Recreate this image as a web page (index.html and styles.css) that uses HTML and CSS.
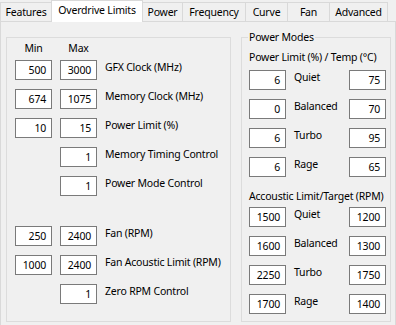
FILE: index.html
```html
<!DOCTYPE html>
<html lang="en">
<head>
  <meta charset="UTF-8" />
  <title>Overdrive Limits</title>
  <link rel="stylesheet" href="styles.css">
</head>
<body>
  <div class="tabs">
    <div class="tab t-features">Features</div>
    <div class="tab t-overdrive active">Overdrive Limits</div>
    <div class="tab t-power">Power</div>
    <div class="tab t-frequency">Frequency</div>
    <div class="tab t-curve">Curve</div>
    <div class="tab t-fan">Fan</div>
    <div class="tab t-advanced">Advanced</div>
  </div>

  <div class="page">
    <div class="group limits">
      <div class="row head">
        <span>Min</span>
        <span>Max</span>
        <span></span>
      </div>
      <div class="row">
        <div class="box">500</div>
        <div class="box">3000</div>
        <div class="label">GFX Clock (MHz)</div>
      </div>
      <div class="row">
        <div class="box">674</div>
        <div class="box">1075</div>
        <div class="label">Memory Clock (MHz)</div>
      </div>
      <div class="row">
        <div class="box">10</div>
        <div class="box">15</div>
        <div class="label">Power Limit (%)</div>
      </div>
      <div class="row">
        <div></div>
        <div class="box">1</div>
        <div class="label">Memory Timing Control</div>
      </div>
      <div class="row">
        <div></div>
        <div class="box">1</div>
        <div class="label">Power Mode Control</div>
      </div>
      <div class="row spaced">
        <div class="box">250</div>
        <div class="box">2400</div>
        <div class="label">Fan (RPM)</div>
      </div>
      <div class="row">
        <div class="box">1000</div>
        <div class="box">2400</div>
        <div class="label">Fan Acoustic Limit (RPM)</div>
      </div>
      <div class="row">
        <div></div>
        <div class="box">1</div>
        <div class="label">Zero RPM Control</div>
      </div>
    </div>

    <fieldset class="modes">
      <legend>Power Modes</legend>
      <div class="sub">Power Limit (%) / Temp (°C)</div>
      <div class="mrow">
        <div class="box">6</div>
        <div class="label">Quiet</div>
        <div class="box">75</div>
      </div>
      <div class="mrow">
        <div class="box">0</div>
        <div class="label">Balanced</div>
        <div class="box">70</div>
      </div>
      <div class="mrow">
        <div class="box">6</div>
        <div class="label">Turbo</div>
        <div class="box">95</div>
      </div>
      <div class="mrow">
        <div class="box">6</div>
        <div class="label">Rage</div>
        <div class="box">65</div>
      </div>

      <div class="sub second">Accoustic Limit/Target (RPM)</div>
      <div class="mrow">
        <div class="box">1500</div>
        <div class="label">Quiet</div>
        <div class="box">1200</div>
      </div>
      <div class="mrow">
        <div class="box">1600</div>
        <div class="label">Balanced</div>
        <div class="box">1300</div>
      </div>
      <div class="mrow">
        <div class="box">2250</div>
        <div class="label">Turbo</div>
        <div class="box">1750</div>
      </div>
      <div class="mrow">
        <div class="box">1700</div>
        <div class="label">Rage</div>
        <div class="box">1400</div>
      </div>
    </fieldset>
  </div>
</body>
</html>
```

FILE: styles.css
```css
body {
  margin: 0;
  width: 396px;
  background: #f0f0f0;
  font-family: "Noto Sans", sans-serif;
  font-size: 10.5px;
  letter-spacing: -0.2px;
  color: #000;
}

/* tab strip */
.tabs {
  display: flex;
  align-items: flex-end;
  height: 21px;
}

.tab {
  box-sizing: border-box;
  height: 19px;
  margin-left: -1px;
  border: 1px solid #d9d9d9;
  border-bottom: none;
  background: #f0f0f0;
  display: flex;
  align-items: center;
  justify-content: center;
  line-height: 15px;
  white-space: nowrap;
}

.tab:first-child {
  margin-left: 0;
}

.tab.active {
  height: 22px;
  margin-bottom: -1px;
  padding-bottom: 2px;
  background: #fff;
  position: relative;
  z-index: 1;
}

.t-features { width: 52px; }
.t-overdrive { width: 92px; }
.t-power { width: 41px; }
.t-frequency { width: 64px; }
.t-curve { width: 43px; }
.t-fan { width: 43px; }
.t-advanced { width: 59px; }

/* tab page */
.page {
  display: flex;
  align-items: flex-start;
  gap: 10px;
  border: 1px solid #d9d9d9;
  padding: 15px 4px 5px 5px;
}

.box {
  box-sizing: border-box;
  width: 37px;
  height: 20px;
  border: 1px solid #7a7a7a;
  background: #fff;
  text-align: right;
  padding-right: 5px;
  line-height: 18px;
}

.label {
  line-height: 15px;
  white-space: nowrap;
}

/* left group */
.group {
  box-sizing: border-box;
  width: 225px;
  border: 1px solid #dcdcdc;
  padding: 3px 8px 17px;
}

.row {
  display: grid;
  grid-template-columns: 37px 37px 1fr;
  column-gap: 8px;
  margin-top: 9px;
}

.row.head {
  margin-top: 0;
  line-height: 15px;
  text-align: center;
}

.head + .row {
  margin-top: 4px;
}

.row.spaced {
  margin-top: 30px;
}

/* right group */
.modes {
  box-sizing: border-box;
  width: 150px;
  min-width: 0;
  margin: -7px 0 0;
  border: 1px solid #dcdcdc;
  padding: 5px 4px 7px 7px;
}

.modes legend {
  padding: 0 1px;
  margin-left: -1px;
  line-height: 15px;
}

.sub {
  line-height: 15px;
  white-space: nowrap;
}

.sub.second {
  margin-top: 12px;
}

.mrow {
  display: grid;
  grid-template-columns: 37px 1fr 37px;
  column-gap: 8px;
  margin-top: 9px;
}

.sub + .mrow {
  margin-top: 5px;
}

.sub.second + .mrow {
  margin-top: 3px;
}
```
